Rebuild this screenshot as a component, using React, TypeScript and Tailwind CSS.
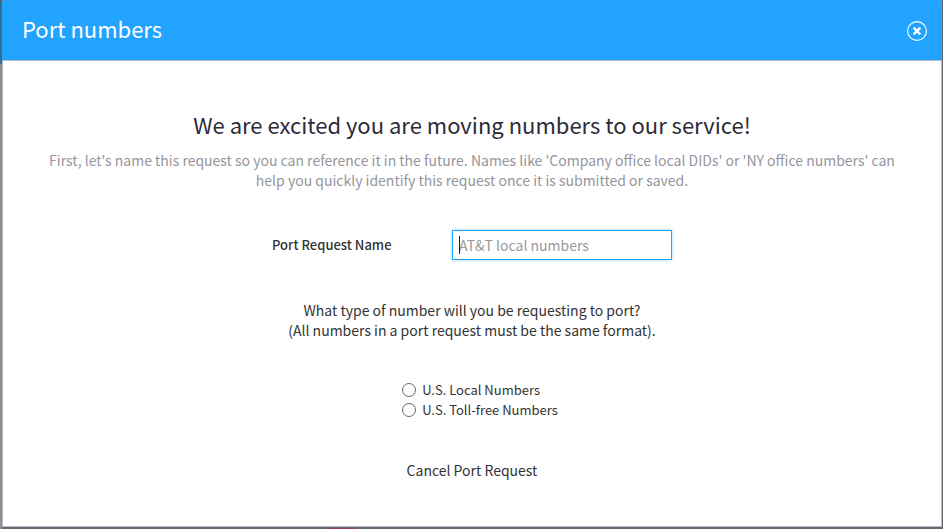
import { useState } from "react";

const numberTypes = [
  { value: "local", label: "U.S. Local Numbers" },
  { value: "tollfree", label: "U.S. Toll-free Numbers" },
];

function CloseIcon() {
  return (
    <svg viewBox="0 0 20 20" className="size-5" fill="none" stroke="currentColor" aria-hidden="true">
      <circle cx="10" cy="10" r="9.4" strokeWidth="1.1" />
      <path d="M6.7 6.7l6.6 6.6M13.3 6.7l-6.6 6.6" strokeWidth="2.4" />
    </svg>
  );
}

function ModalHeader() {
  return (
    <header className="flex h-15 items-start justify-between bg-[#22a3ff] pt-3 pr-[15px] pl-5 text-white">
      <h1 className="text-[22px] leading-8">Port numbers</h1>
      <button type="button" aria-label="Close" className="mt-[9px] cursor-pointer">
        <CloseIcon />
      </button>
    </header>
  );
}

export default function App() {
  const [name, setName] = useState("");
  const [numberType, setNumberType] = useState("");

  return (
    <div className="flex min-h-screen flex-col bg-[#6a6870] bg-[linear-gradient(#346f9c_64px,#8f8e91_64px)] bg-[length:2px_100%] bg-no-repeat font-['Noto_Sans_CJK_SC','Noto_Sans',sans-serif] text-[#333]">
      <div role="dialog" aria-label="Port numbers" className="mr-px ml-0.5 flex flex-1 flex-col overflow-hidden rounded-t-sm bg-white">
        <ModalHeader />
        <form className="flex flex-1 flex-col items-center border border-[#b8b6c2] px-10 pt-[47px] pb-10 text-center text-sm leading-5">
          <h2 className="text-[22px] leading-8 text-[#2d2b39]">We are excited you are moving numbers to our service!</h2>
          <p className="mt-2.5 text-[#96959c]">
            First, let's name this request so you can reference it in the future. Names like 'Company office local DIDs' or 'NY office numbers' can help you quickly identify this request once it is submitted or saved.
          </p>

          <div className="mt-10 flex items-center">
            <label htmlFor="request-name" className="w-45 text-left text-[13px] font-medium">
              Port Request Name
            </label>
            <div className="relative">
              <input
                id="request-name"
                type="text"
                autoFocus
                value={name}
                onChange={(e) => setName(e.target.value)}
                placeholder="AT&T local numbers"
                className="block h-7.5 w-55 border border-[#22a3ff] px-1.5 shadow-[0_0_3px_#22a3ff80] outline-none placeholder:text-[#999] placeholder-shown:caret-transparent"
              />
              {/* caret shown over the placeholder while the field is empty */}
              {name === "" && <span className="pointer-events-none absolute inset-y-1.5 left-[7px] w-px bg-[#222]" />}
            </div>
          </div>

          <p className="mt-10">
            What type of number will you be requesting to port?
            <br />
            (All numbers in a port request must be the same format).
          </p>

          <div role="radiogroup" aria-label="Number type" className="mt-10 ml-4 text-left text-[13px]">
            {numberTypes.map((type) => (
              <label key={type.value} className="flex items-center gap-1.5">
                <input
                  type="radio"
                  name="number-type"
                  value={type.value}
                  checked={numberType === type.value}
                  onChange={() => setNumberType(type.value)}
                  className="size-3.5 appearance-none rounded-full border border-[#666] bg-white checked:border-4 checked:border-[#22a3ff]"
                />
                {type.label}
              </label>
            ))}
          </div>

          <button type="button" className="mt-10 cursor-pointer">
            Cancel Port Request
          </button>
        </form>
      </div>

      {/* sliver of the dimmed page under the dialog */}
      <div className="flex h-0.5 items-end pl-[326px]">
        <div className="h-px w-7.5 bg-[#8f4552]" />
      </div>
    </div>
  );
}
